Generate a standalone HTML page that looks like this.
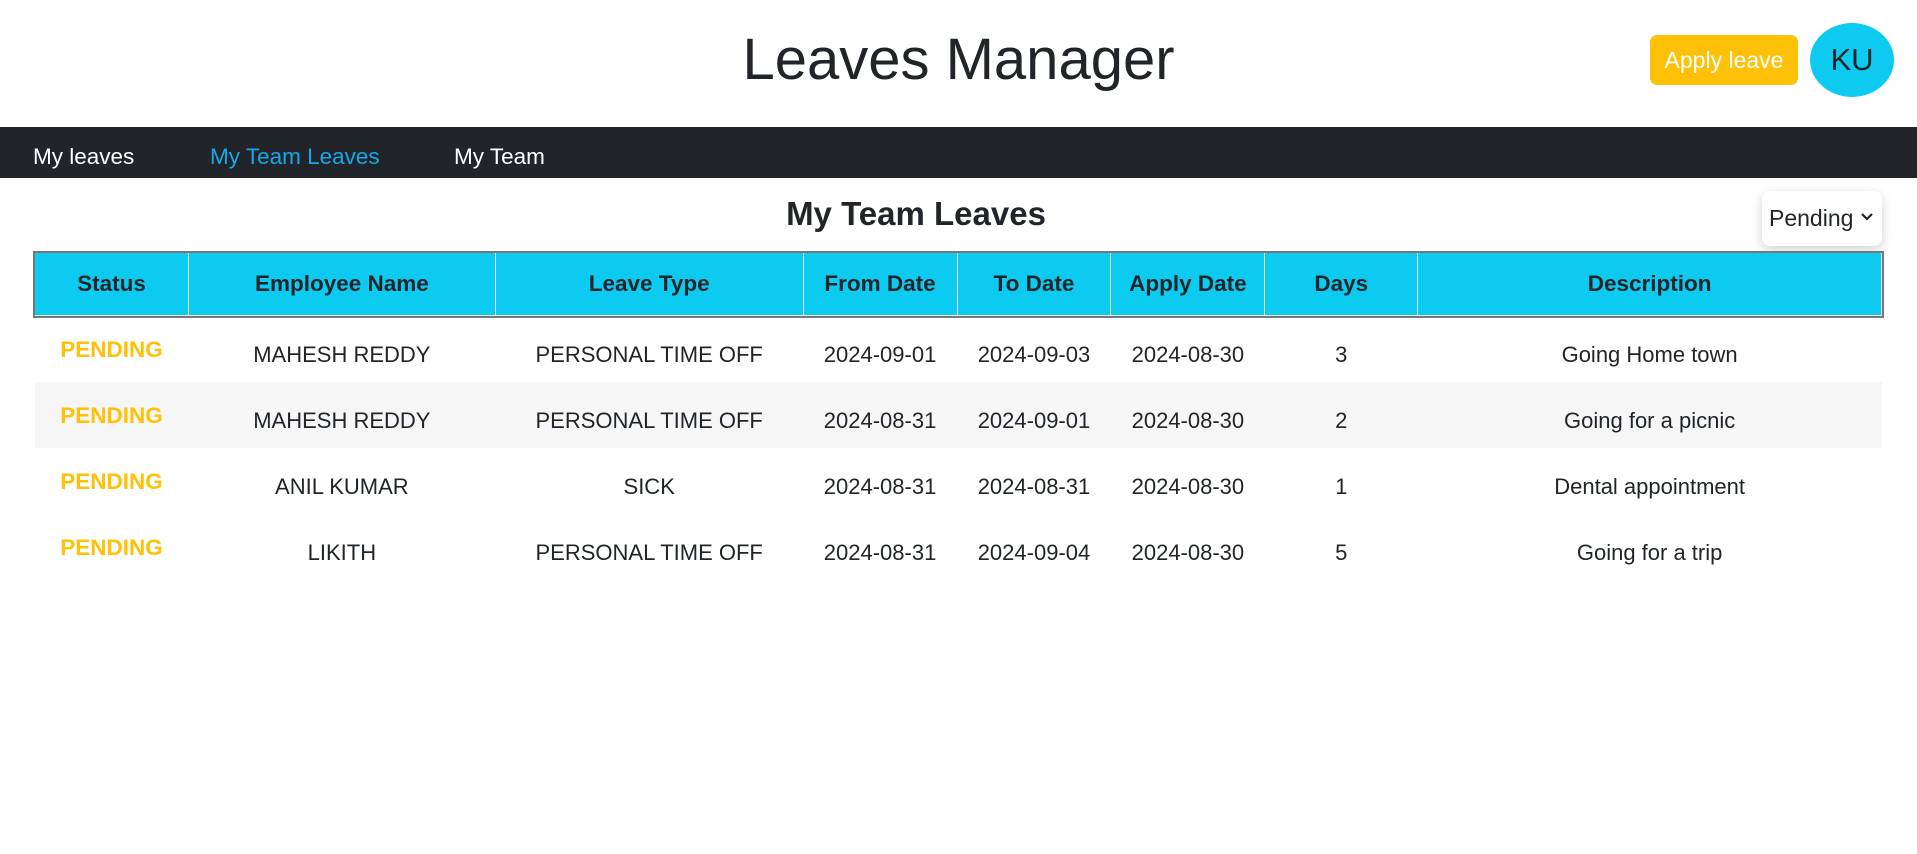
<!DOCTYPE html>
<html><head><meta charset="utf-8"><style>
*{box-sizing:border-box;margin:0;padding:0}
body{width:1917px;height:854px;background:#fff;font-family:"Liberation Sans",sans-serif;color:#212529;position:relative;overflow:hidden}
.title{position:absolute;top:21px;left:0;width:1917px;text-align:center;font-size:58px;line-height:78px}
.apply{position:absolute;left:1650px;top:35px;width:148px;height:50px;background:#ffc107;border-radius:7px;color:#fff;font-size:23px;line-height:50px;text-align:center}
.av{position:absolute;left:1810px;top:23px;width:84px;height:74px;border-radius:50%;background:#0dcaf0;font-size:31px;line-height:74px;text-align:center;color:#212529}
.nav{position:absolute;left:0;top:127px;width:1917px;height:51px;background:#212529;font-size:22.5px;line-height:51px;color:#fff}
.nav span{position:absolute;top:4px}
h2{position:absolute;top:192px;left:0;width:1832px;text-align:center;font-size:33px;font-weight:bold;line-height:44px}
.sel{position:absolute;left:1762px;top:191px;width:120px;height:55px;background:#fff;border-radius:8px;box-shadow:0 4px 12px rgba(0,0,0,.18);font-size:23px;line-height:55px;padding-left:7px}
table{position:absolute;left:34px;top:252px;width:1848px;border-collapse:collapse;font-size:22px}
th{background:#0dcaf0;height:63px;font-weight:bold;border:1px solid #e8e8e8;text-align:center;font-size:22.5px}
thead tr{outline:2px solid #777}
td{height:66px;text-align:center;padding-top:12px}
tbody tr:nth-child(2) td{background:#f6f6f6}
td.p{color:#ffc107;font-weight:bold;vertical-align:top;padding-top:21px;font-size:22.5px}
</style></head><body>
<div class="title">Leaves Manager</div>
<div class="apply">Apply leave</div>
<div class="av">KU</div>
<div class="nav"><span style="left:33px">My leaves</span><span style="left:210px;color:#17a7ea">My Team Leaves</span><span style="left:454px">My Team</span></div>
<h2>My Team Leaves</h2>
<div class="sel">Pending <svg width="14" height="10" viewBox="0 0 14 10" style="vertical-align:4px"><path d="M2 2l5 5 5-5" fill="none" stroke="#212529" stroke-width="2.2"/></svg></div>
<table>
<colgroup><col style="width:154px"><col style="width:307px"><col style="width:308px"><col style="width:154px"><col style="width:154px"><col style="width:154px"><col style="width:153px"><col style="width:464px"></colgroup>
<thead><tr><th>Status</th><th>Employee Name</th><th>Leave Type</th><th>From Date</th><th>To Date</th><th>Apply Date</th><th>Days</th><th>Description</th></tr></thead>
<tbody>
<tr><td class="p">PENDING</td><td>MAHESH REDDY</td><td>PERSONAL TIME OFF</td><td>2024-09-01</td><td>2024-09-03</td><td>2024-08-30</td><td>3</td><td>Going Home town</td></tr>
<tr><td class="p">PENDING</td><td>MAHESH REDDY</td><td>PERSONAL TIME OFF</td><td>2024-08-31</td><td>2024-09-01</td><td>2024-08-30</td><td>2</td><td>Going for a picnic</td></tr>
<tr><td class="p">PENDING</td><td>ANIL KUMAR</td><td>SICK</td><td>2024-08-31</td><td>2024-08-31</td><td>2024-08-30</td><td>1</td><td>Dental appointment</td></tr>
<tr><td class="p">PENDING</td><td>LIKITH</td><td>PERSONAL TIME OFF</td><td>2024-08-31</td><td>2024-09-04</td><td>2024-08-30</td><td>5</td><td>Going for a trip</td></tr>
</tbody></table>
</body></html>
